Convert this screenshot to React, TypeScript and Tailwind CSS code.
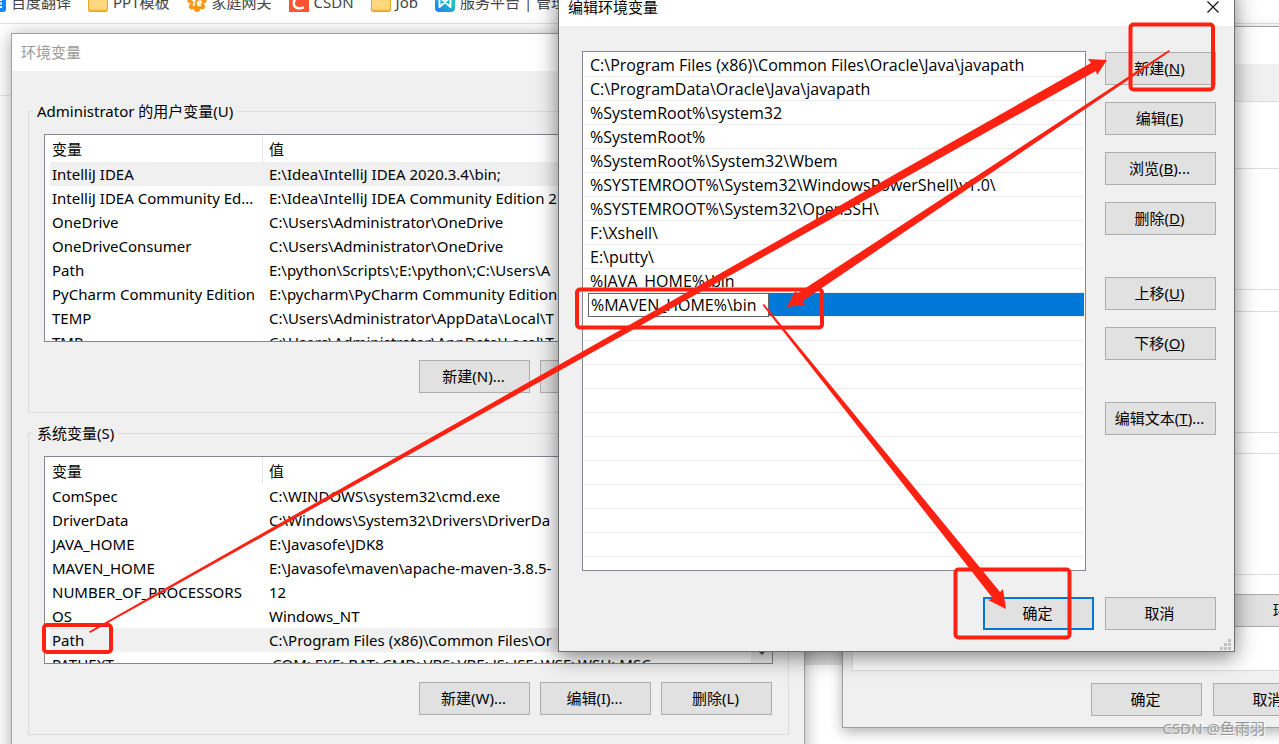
import React, { useState } from "react";

type Variable = {
  name: string;
  value: string;
};

const userVariables: Array<Variable> = [
  { name: "IntelliJ IDEA", value: "E:\\Idea\\IntelliJ IDEA 2020.3.4\\bin;" },
  {
    name: "IntelliJ IDEA Community Ed...",
    value: "E:\\Idea\\IntelliJ IDEA Community Edition 2",
  },
  { name: "OneDrive", value: "C:\\Users\\Administrator\\OneDrive" },
  { name: "OneDriveConsumer", value: "C:\\Users\\Administrator\\OneDrive" },
  { name: "Path", value: "E:\\python\\Scripts\\;E:\\python\\;C:\\Users\\A" },
  {
    name: "PyCharm Community Edition",
    value: "E:\\pycharm\\PyCharm Community Edition",
  },
  { name: "TEMP", value: "C:\\Users\\Administrator\\AppData\\Local\\T" },
  { name: "TMP", value: "C:\\Users\\Administrator\\AppData\\Local\\T" },
];

const systemVariables: Array<Variable> = [
  { name: "ComSpec", value: "C:\\WINDOWS\\system32\\cmd.exe" },
  { name: "DriverData", value: "C:\\Windows\\System32\\Drivers\\DriverDa" },
  { name: "JAVA_HOME", value: "E:\\Javasofe\\JDK8" },
  { name: "MAVEN_HOME", value: "E:\\Javasofe\\maven\\apache-maven-3.8.5-" },
  { name: "NUMBER_OF_PROCESSORS", value: "12" },
  { name: "OS", value: "Windows_NT" },
  { name: "Path", value: "C:\\Program Files (x86)\\Common Files\\Or" },
  {
    name: "PATHEXT",
    value: ".COM;.EXE;.BAT;.CMD;.VBS;.VBE;.JS;.JSE;.WSF;.WSH;.MSC",
  },
];

const paths: Array<string> = [
  "C:\\Program Files (x86)\\Common Files\\Oracle\\Java\\javapath",
  "C:\\ProgramData\\Oracle\\Java\\javapath",
  "%SystemRoot%\\system32",
  "%SystemRoot%",
  "%SystemRoot%\\System32\\Wbem",
  "%SYSTEMROOT%\\System32\\WindowsPowerShell\\v1.0\\",
  "%SYSTEMROOT%\\System32\\OpenSSH\\",
  "F:\\Xshell\\",
  "E:\\putty\\",
  "%JAVA_HOME%\\bin",
];

const emptyRows = Array.from({ length: 10 }, (_, i) => i);

function Button({
  children,
  className = "w-[111px] border border-[#adadad]",
}: {
  children: React.ReactNode;
  className?: string;
}) {
  return (
    <button
      type="button"
      className={`h-[33px] shrink-0 whitespace-nowrap bg-[#e1e1e1] pb-0.5 pr-0.5 text-center hover:bg-[#e5f1fb] ${className}`}
    >
      {children}
    </button>
  );
}

function FolderIcon() {
  return (
    <svg className="size-5 shrink-0" viewBox="0 0 20 20">
      <path
        d="M.5 4A1.500 1.500 0 0 1 2 2.500h5.500l2 2.500H18a1.500 1.500 0 0 1 1.500 1.500V18a1.500 1.500 0 0 1-1.500 1.500H2A1.500 1.500 0 0 1 .5 18z"
        fill="#ffd77d"
        stroke="#eda420"
      />
      <path d="M1 17.500h18v.5a1 1 0 0 1-1 1H2a1 1 0 0 1-1-1z" fill="#f8b636" />
    </svg>
  );
}

function BookmarkBar() {
  return (
    <nav className="h-6 overflow-hidden border-b border-[#e2e2e2] text-[#444]">
      <div className="-mt-[17px] flex h-[38px] items-center gap-[17px] whitespace-nowrap">
        <a href="#translate" className="-ml-3.5 flex items-center gap-[5px]">
          <svg className="size-5 shrink-0" viewBox="0 0 20 20">
            <rect width="20" height="20" rx="3" fill="#1d84f5" />
            <path d="M11 8h5M11 11.500h5M11 15h5" stroke="#fff" strokeWidth="1.800" />
          </svg>
          百度翻译
        </a>
        <a href="#ppt" className="flex items-center gap-[5px]">
          <FolderIcon />
          PPT模板
        </a>
        <a href="#gateway" className="flex items-center gap-[5px]">
          <svg className="size-5 shrink-0" viewBox="0 0 20 20">
            <g fill="#fb9618">
              <circle cx="10" cy="9" r="7" />
              <circle cx="3.500" cy="8" r="3.200" />
              <circle cx="16.500" cy="8" r="3.200" />
              <circle cx="5" cy="14.500" r="3" />
              <circle cx="15" cy="14.500" r="3" />
              <circle cx="10" cy="17" r="3" />
              <circle cx="10" cy="3" r="3" />
            </g>
            <path
              d="M5 8.500 8 6.500 6.500 14M10.500 12c2 0 3.800-1 3.600-2.300-.3-1.300-3-.8-3.500 1.600-.4 2.200 1.600 2.700 3.600 1.600"
              fill="none"
              stroke="#fff"
              strokeWidth="1.700"
            />
          </svg>
          家庭网关
        </a>
        <a href="#csdn" className="flex items-center gap-[5px]">
          <svg className="size-5 shrink-0" viewBox="0 0 20 20">
            <rect width="20" height="20" fill="#fc5531" />
            <path
              d="M16 6C14 4.500 11.500 4.200 9.500 5 6.500 6 4.500 8.800 4.800 12c.3 4 5 5.500 10 3.300"
              fill="none"
              stroke="#fff"
              strokeWidth="2.500"
            />
          </svg>
          CSDN
        </a>
        <a href="#job" className="flex items-center gap-[5px]">
          <FolderIcon />
          Job
        </a>
        <a href="#service" className="flex items-center gap-[5px]">
          <svg className="size-5 shrink-0" viewBox="0 0 20 20">
            <defs>
              <linearGradient id="service" x1="0" y1="1" x2="1" y2="0">
                <stop offset="0" stopColor="#1f7df5" />
                <stop offset="1" stopColor="#20e0a8" />
              </linearGradient>
            </defs>
            <rect width="20" height="20" rx="4" fill="url(#service)" />
            <path
              d="M4.500 5v10l11-10v10z"
              fill="none"
              stroke="#fff"
              strokeWidth="2"
              strokeLinejoin="round"
            />
          </svg>
          服务平台 | 管理
        </a>
      </div>
    </nav>
  );
}

function VariableList({
  rows,
  selected,
  scrollable = false,
}: {
  rows: Array<Variable>;
  selected: number;
  scrollable?: boolean;
}) {
  return (
    <div className="mt-[13px] flex h-[208px] overflow-hidden border border-[#828790] bg-white pl-[5px]">
      <div className="min-w-0 flex-1">
        <table className="w-full table-fixed border-separate border-spacing-0 text-left">
          <colgroup>
            <col className="w-[213px]" />
            <col />
          </colgroup>
          <thead>
            <tr className="h-[27px]">
              <th className="border-r border-[#e5e5e5] p-0 pl-0.5 font-normal">
                变量
              </th>
              <th className="p-0 pl-1.5 font-normal">值</th>
            </tr>
          </thead>
          <tbody>
            {rows.map((item: Variable, index: number) => (
              <tr
                key={item.name}
                className={`h-6 ${index === selected ? "bg-[#f0f0f0]" : ""}`}
              >
                <td className="whitespace-nowrap p-0 pl-0.5">{item.name}</td>
                <td className="overflow-hidden whitespace-nowrap p-0 pl-1.5">
                  {item.value}
                </td>
              </tr>
            ))}
          </tbody>
        </table>
      </div>
      {scrollable && (
        <div className="flex w-[21px] flex-col justify-end bg-[#f0f0f0] pb-[7px]">
          <svg className="mx-auto h-2 w-2.5" viewBox="0 0 10 8">
            <path d="M1 1.500 5 5.500l4-4" fill="none" stroke="#555" strokeWidth="2" />
          </svg>
        </div>
      )}
    </div>
  );
}

function EnvironmentWindow() {
  return (
    <section className="absolute left-[11px] top-[33px] w-[794px] border border-[#a0a0a0] bg-[#f0f0f0] shadow-[0_2px_16px_rgba(0,0,0,0.35)]">
      <h2 className="flex h-[37px] items-center bg-white pb-0.5 pl-[9px] text-[#999]">
        环境变量
      </h2>
      <div className="flex flex-col gap-2.5 pb-10 pl-4 pr-[15px] pt-[30px]">
        <fieldset className="min-w-0 border border-[#dcdcdc] px-[15px] pb-[19px]">
          <legend className="-ml-[11px] px-1">Administrator 的用户变量(U)</legend>
          <VariableList rows={userVariables} selected={0} />
          <div className="mt-[18px] flex justify-end gap-2.5 pr-px">
            <Button>新建(N)...</Button>
            <Button>编辑(E)...</Button>
            <Button>删除(D)</Button>
          </div>
        </fieldset>
        <fieldset className="min-w-0 border border-[#dcdcdc] px-[15px] pb-[19px]">
          <legend className="-ml-[11px] px-1">系统变量(S)</legend>
          <VariableList rows={systemVariables} selected={6} scrollable />
          <div className="mt-[18px] flex justify-end gap-2.5 pr-px">
            <Button>新建(W)...</Button>
            <Button>编辑(I)...</Button>
            <Button>删除(L)</Button>
          </div>
        </fieldset>
      </div>
    </section>
  );
}

function SystemPropertiesWindow() {
  return (
    <section className="absolute left-[842px] top-[26px] w-[615px] border border-[#a0a0a0] bg-[#f0f0f0] shadow-[0_4px_12px_rgba(0,0,0,0.3)]">
      <div className="h-[37px] bg-white" />
      <div className="px-[9px] pt-[37px]">
        <div className="flex flex-col border border-[#dcdcdc] bg-white px-4 pb-[43px] pt-[66px]">
          <div className="h-[122px] border border-[#dcdcdc]" />
          <div className="mt-[21px] h-[122px] border border-[#dcdcdc]" />
          <div className="mt-5 h-[122px] border border-[#dcdcdc]" />
          <div className="mt-[19px] flex justify-end pr-[18px]">
            <Button className="w-[184px] border border-[#adadad]">
              环境变量(N)...
            </Button>
          </div>
        </div>
      </div>
      <div className="flex gap-[11px] pb-[11px] pl-[248px] pt-3">
        <Button>确定</Button>
        <Button>取消</Button>
      </div>
    </section>
  );
}

function EditDialog() {
  const [value, setValue] = useState("%MAVEN_HOME%\\bin");
  return (
    <section className="absolute -top-3 left-[558px] w-[677px] border border-[#6e6e6e] bg-[#f0f0f0] shadow-[0_5px_20px_rgba(0,0,0,0.5)]">
      <div className="flex h-[37px] items-center justify-between bg-white pb-0.5 pl-[9px] pr-[15px]">
        <h2>编辑环境变量</h2>
        <button type="button" aria-label="关闭">
          <svg className="size-3" viewBox="0 0 12 12">
            <path d="M.5.5l11 11M11.500.5l-11 11" stroke="#111" strokeWidth="1.200" />
          </svg>
        </button>
      </div>
      <div className="flex gap-[19px] pl-[23px] pr-[18px] pt-[25px]">
        <ul className="h-[520px] min-w-0 flex-1 overflow-hidden border border-[#828790] bg-white px-px pt-px font-['Open_Sans',sans-serif] text-[16px] leading-5">
          {paths.map((item: string) => (
            <li
              key={item}
              className="flex h-6 items-center whitespace-nowrap border-b border-[#ededed] pl-1.5"
            >
              {item}
            </li>
          ))}
          <li className="flex h-6 items-center border-b border-[#ededed] bg-[#0078d7]">
            <div className="h-6 bg-white pl-1">
              <input
                aria-label="路径"
                value={value}
                onChange={(e) => setValue(e.target.value)}
                className="block h-6 w-[181px] border border-[#646464] bg-white px-0.5 outline-none"
              />
            </div>
          </li>
          {emptyRows.map((row: number) => (
            <li key={row} className="h-6 border-b border-[#ededed]" />
          ))}
        </ul>
        <div className="flex flex-col gap-[17px] pt-px">
          <Button>
            新建(<u>N</u>)
          </Button>
          <Button>
            编辑(<u>E</u>)
          </Button>
          <Button>
            浏览(<u>B</u>)...
          </Button>
          <Button>
            删除(<u>D</u>)
          </Button>
          <div className="mt-[25px] flex flex-col gap-[17px]">
            <Button>
              上移(<u>U</u>)
            </Button>
            <Button>
              下移(<u>O</u>)
            </Button>
          </div>
          <div className="mt-[25px] flex">
            <Button>
              编辑文本(<u>T</u>)...
            </Button>
          </div>
        </div>
      </div>
      <div className="flex justify-end gap-[11px] pr-[18px] pt-[26px]">
        <Button className="w-[111px] border-2 border-[#0078d7]">确定</Button>
        <Button>取消</Button>
      </div>
      <div className="flex h-[21px] items-end justify-end pb-px pr-[3px]">
        <svg className="size-[11px]" viewBox="0 0 11 11" fill="#bfbfbf">
          <path d="M8 0h3v3H8zM8 4h3v3H8zM4 4h3v3H4zM8 8h3v3H8zM4 8h3v3H4zM0 8h3v3H0z" />
        </svg>
      </div>
    </section>
  );
}

function Annotations() {
  return (
    <svg
      className="pointer-events-none absolute left-0 top-0"
      width="1279"
      height="744"
      viewBox="0 0 1279 744"
    >
      <g fill="none" stroke="#ff2112" strokeWidth="4">
        <rect x="44" y="625" width="67" height="27" rx="3" />
        <rect x="577" y="289.500" width="245" height="38" rx="3" />
        <rect x="1130.500" y="24.500" width="82.500" height="65" rx="3" />
        <rect x="955.500" y="569.500" width="114" height="68" rx="3" />
      </g>
      <g fill="#ff2112">
        <path d="M89 631.500 1091 63l-3-4 19 1-10 15-1-4L90 633z" />
        <path d="M1169 50 798 293l-3-1.500-8 15.500 18-2-3-3.500L1170 51.500z" />
        <path d="M764 304 1000 592l3-3 3 20-18-9 5-1.500L762.500 305z" />
      </g>
    </svg>
  );
}

export default function App() {
  return (
    <main className="relative h-screen overflow-hidden bg-white font-['Noto_Sans','Noto_Sans_CJK_SC',sans-serif] text-[15px] leading-5 text-black">
      <BookmarkBar />
      <div className="h-[72px] border-b border-[#e8e8e8]" />
      <div className="ml-auto mt-[544px] h-[25px] w-[479px] bg-[#e6e6e6]" />
      <SystemPropertiesWindow />
      <EnvironmentWindow />
      <EditDialog />
      <Annotations />
      <p className="absolute bottom-1.5 right-3.5 text-[#999] [text-shadow:1px_1px_1px_white]">
        CSDN @鱼雨羽
      </p>
    </main>
  );
}
